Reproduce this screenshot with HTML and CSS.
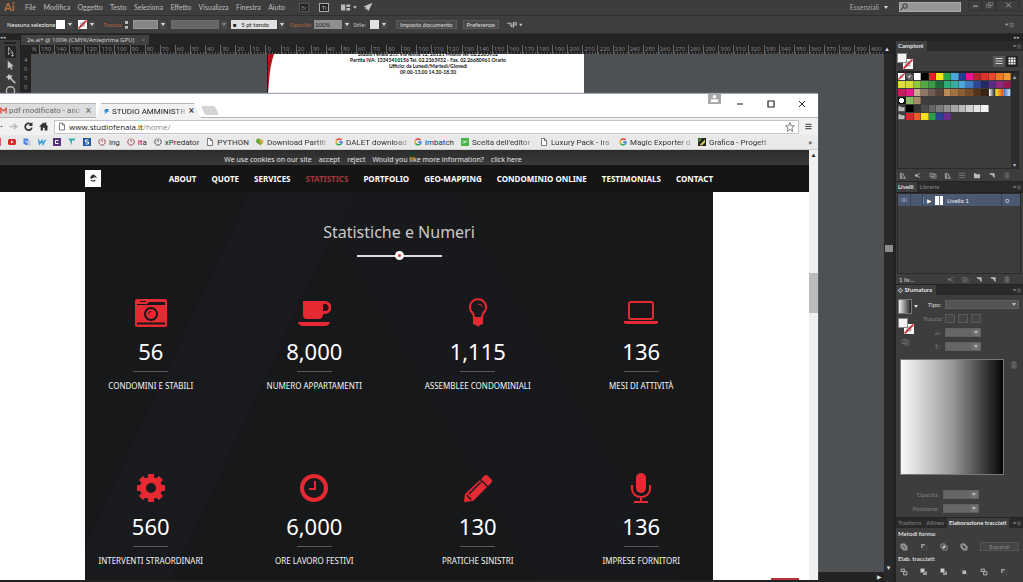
FILE: index.html
```html
<!DOCTYPE html>
<html lang="it">
<head>
<meta charset="utf-8">
<title>Illustrator</title>
<link rel="stylesheet" href="styles.css">
</head>
<body>
<svg class="defs" aria-hidden="true">
  <symbol id="clock" viewBox="0 0 16 16"><path d="M5 2a6.500 6.500 0 1 0 6 0M8 1v7" fill="none" stroke="currentColor" stroke-width="1.600"/></symbol>
  <symbol id="page" viewBox="0 0 16 16"><path d="M3 1h6l4 4v10H3zM9 1v4h4" fill="#fff" stroke="#555" stroke-width="1.500"/></symbol>
  <symbol id="goog" viewBox="0 0 16 16"><g fill="none" stroke-width="3"><path d="M13 4A6 6 0 0 0 3 5" stroke="#e34133"/><path d="M3 5a6 6 0 0 0 0 6" stroke="#f3b605"/><path d="M3 11a6 6 0 0 0 9 1" stroke="#32a350"/><path d="M12 12.500A6 6 0 0 0 14 8H8" stroke="#4081ec"/></g></symbol>
  <symbol id="menu" viewBox="0 0 16 10"><path d="M0 3l3 3 3-3zM8 2h8M8 5h8M8 8h8" fill="currentColor" stroke="currentColor"/></symbol>
  <symbol id="unite" viewBox="0 0 16 16"><path d="M2 2h8v4h4v8H6v-4H2z" fill="#777" stroke="#bbb" stroke-width="1.500"/></symbol>
  <symbol id="minus" viewBox="0 0 16 16"><path d="M2 2h8v3H5v5H2z" fill="#999"/><path d="M6 6h8v8H6z" fill="none" stroke="#777" stroke-dasharray="2"/></symbol>
  <symbol id="cross" viewBox="0 0 16 16"><path d="M2 2h8v8H2zM6 6h8v8H6z" fill="none" stroke="#aaa" stroke-width="1.500"/><path d="M6 6h4v4H6z" fill="#ccc"/></symbol>
  <symbol id="exclude" viewBox="0 0 16 16"><path d="M2 2h8v8H2zM6 6h8v8H6z" fill="#666" stroke="#bbb" stroke-width="1.500"/><path d="M6 6h4v4H6z" fill="#333"/></symbol>
  <symbol id="divide" viewBox="0 0 16 16"><path d="M2 2h7v5H2zM7 7h7v7H7z" fill="#555" stroke="#bbb" stroke-width="1.500"/></symbol>
  <symbol id="trim" viewBox="0 0 16 16"><path d="M1 1h8v8H1z" fill="#c9c9c9"/><path d="M10 7h4v7H6v-4h4z" fill="#999"/></symbol>
  <symbol id="crop" viewBox="0 0 16 16"><path d="M5 5h7v7H5z" fill="#bbb"/><path d="M1 4h4M12 12h3M3 8h2M12 8h2" stroke="#888"/></symbol>
  <symbol id="new" viewBox="0 0 16 16"><path d="M2 3h12v11l-5-5V7H5z" fill="#bbb"/></symbol>
  <symbol id="trash" viewBox="0 0 16 16"><path d="M2 4h12M6 4V2h4v2M4 5v9h8V5M7 6v7M9 6v7" fill="none" stroke="currentColor" stroke-width="1.400"/></symbol>
  <symbol id="books" viewBox="0 0 16 16"><path d="M2 2v12M5 2v12M8 3l4 11M1 14h14" fill="none" stroke="#aaa" stroke-width="2"/></symbol>
  <symbol id="share" viewBox="0 0 16 16"><path d="M13 3L4 8l9 5" fill="none" stroke="#aaa" stroke-width="2"/><circle cx="4" cy="8" r="3" fill="#bbb"/></symbol>
  <symbol id="cards" viewBox="0 0 16 16"><path d="M1 3h10v8H1zM5 6h10v8H5zM8 10h4" fill="none" stroke="#aaa" stroke-width="1.500"/></symbol>
  <symbol id="folder" viewBox="0 0 16 16"><path d="M1 3h5l1 2h8v9H1z" fill="#bbb"/></symbol>
  <symbol id="list" viewBox="0 0 16 16"><path d="M1 3h14M1 8h14M1 13h14" stroke="currentColor" stroke-width="2"/></symbol>
  <symbol id="grid" viewBox="0 0 16 16"><path d="M1 3h14M1 8h14M1 13h14" stroke="#eee" stroke-width="4" stroke-dasharray="4 1"/></symbol>
  <symbol id="none" viewBox="0 0 16 16"><path d="M0 0h16v16H0z" fill="#fff"/><path d="M1 15L15 1" stroke="#d8262c" stroke-width="3"/><path d="M5 5h6v6H5z" fill="none" stroke="#555"/></symbol>
</svg>

<div class="app">
  <header class="menubar">
    <span class="ai">Ai</span>
    <nav class="menus"><button>File</button><button>Modifica</button><button>Oggetto</button><button>Testo</button><button>Seleziona</button><button>Effetto</button><button>Visualizza</button><button>Finestra</button><button>Aiuto</button></nav>
    <span class="chip dim">Br</span><span class="chip">Ti</span>
    <svg class="layout-ico" viewBox="0 0 28 14"><path d="M0 2h7v10H0zM9 2h6v4H9zM9 8h6v4H9z" fill="#bbb"/><path d="M20 5h6l-3 4z" fill="#ccc"/></svg>
    <svg class="rocket" viewBox="0 0 16 16"><path d="M15 1L1 7l4 2-2 3 4-1 1 4 3-5z" fill="#c4c4c4"/></svg>
    <button class="workspace">Essenziali <i class="caret"></i></button>
    <label class="find"><svg viewBox="0 0 16 16"><circle cx="10" cy="6" r="4.500" fill="none" stroke="#333" stroke-width="2"/><path d="M6 9l-5 6" stroke="#333" stroke-width="2"/></svg><input type="text" aria-label="Cerca"></label>
    <button class="wbtn" aria-label="Riduci"><svg viewBox="0 0 12 10"><path d="M2 7h8" stroke="#aaa" stroke-width="2"/></svg></button>
    <button class="wbtn" aria-label="Ripristina"><svg viewBox="0 0 12 10"><path d="M4 1h7v5H4zM1 4h7v5H1z" fill="none" stroke="#999"/></svg></button>
    <button class="wbtn" aria-label="Chiudi"><svg viewBox="0 0 12 10"><path d="M2 1l8 8M10 1L2 9" stroke="#aaa" stroke-width="1.500"/></svg></button>
  </header>

  <div class="controls">
    <span class="sel-state">Nessuna selezione</span>
    <span class="sw white"></span><i class="caret"></i>
    <svg class="sw"><use href="#none"/></svg><i class="caret"></i>
    <span class="orange stroke-label">Traccia:</span><i class="spin"></i>
    <select class="w-s" aria-label="Traccia"><option></option></select><i class="caret"></i>
    <select class="w-m dimfield" aria-label="Profilo"><option></option></select><i class="caret dimcaret"></i>
    <select class="brush" aria-label="Pennello"><option>■ &nbsp; 5 pt tondo</option></select><i class="caret"></i>
    <label class="orange" for="opac">Opacità:</label><input id="opac" class="opac" type="text" value="100%"><i class="caret"></i>
    <span class="style-label">Stile:</span><span class="sw grey"></span><i class="caret"></i>
    <button class="cbtn">Imposta documento</button><button class="cbtn">Preferenze</button>
    <svg class="tail" viewBox="0 0 28 14"><path d="M1 4h8M5 7h4v4M12 2v10M12 3h5v4h-5" stroke="#bbb" fill="none" stroke-width="2"/><path d="M22 5h6l-3 4z" fill="#ccc"/></svg>
    <svg class="flyout"><use href="#menu"/></svg>
  </div>

  <div class="work">
    <aside class="tools">
      <span class="dots">◂◂</span>
      <span class="grip"></span>
      <svg class="active" viewBox="0 0 16 16"><path d="M5 1v11l3-3 4 1zM11 11v4M9 13h4" fill="none" stroke="#ccc"/></svg>
      <svg viewBox="0 0 16 16"><path d="M4 1v12l3-3 2 4 2-1-2-4h4z" fill="#c8c8c8"/></svg>
      <svg viewBox="0 0 16 16"><path d="M7 7l8 8" stroke="#ccc" stroke-width="2"/><path d="M6 1l1 3 4-1-2 3 2 3-4-1-2 3-1-4-3-1 3-2z" fill="#ccc"/></svg>
      <svg viewBox="0 0 16 16"><circle cx="8" cy="7" r="6" fill="none" stroke="#bbb" stroke-width="2"/></svg>
    </aside>
    <main class="doc">
      <div class="doctabs"><span class="doctab">2e.ai* @ 100% (CMYK/Anteprima GPU) <b>×</b></span></div>
      <div class="ruler"><span class="origin">N</span><div class="ticks" id="ticks"></div><span class="up">▲</span></div>
      <div class="stage">
        <div class="vruler"><span>4</span><span>0</span><span>5</span><span>0</span></div>
        <div class="canvas">
          <div class="artboard">
            <svg class="swoosh" viewBox="0 0 8 40"><path d="M0 0h6Q2 12 1 27L0 40z" fill="#b5121b"/></svg>
            <p>Studio Fenaia S.r.l. Via Roma 12, 20121 Milano tel. 02.2363932</p>
            <p>Partita IVA: 13343410156 Tel. 02.2363932 - Fax. 02.26680961 Orario</p>
            <p>Ufficio: da Lunedì/Martedì/Giovedì</p>
            <p>09.00-13.00 14.30-18.30</p>
          </div>
          <div class="hscroll">▶</div>
        </div>
        <div class="vscroll"><span class="thumb"></span><span class="down">▼</span></div>
      </div>
    </main>
    <aside class="panels">
      <div class="collapse">▸▸</div>
      <div class="ptabs"><span class="on">Campioni</span><svg><use href="#menu"/></svg></div>
      <section class="pbody swatches">
        <div class="swhead"><span class="fillstroke"><i></i><svg><use href="#none"/></svg></span><button class="view" aria-label="Elenco"><svg><use href="#list"/></svg></button><button class="view dark" aria-label="Griglia"><svg><use href="#grid"/></svg></button></div>
        <div class="swlist"><div class="swgrid" id="swatches"></div><div class="swscroll"><span>▴</span><span>▾</span></div></div>
        <div class="pfoot"><svg><use href="#books"/></svg><svg><use href="#share"/></svg><svg><use href="#cards"/></svg><svg><use href="#books"/></svg><svg class="faint"><use href="#list"/></svg><svg><use href="#folder"/></svg><svg><use href="#new"/></svg><svg class="faint"><use href="#trash"/></svg></div>
      </section>
      <div class="ptabs"><span class="on">Livelli</span><span>Librerie</span><svg><use href="#menu"/></svg></div>
      <section class="pbody layers">
        <div class="layerlist"><div class="layer"><svg class="eye" viewBox="0 0 16 10"><path d="M1 5q7-8 14 0-7 7-14 0z" fill="none" stroke="#8fa0bb" stroke-width="1.500"/><circle cx="8" cy="5" r="2" fill="#8fa0bb"/></svg><i class="lock"></i><span class="tri">▶</span><i class="thumbn"></i><span class="lname">Livello 1</span><i class="target">○</i></div></div>
        <div class="pfoot layerfoot"><span>1 liv...</span><svg class="faint"><use href="#share"/></svg><svg class="faint"><use href="#cards"/></svg><svg><use href="#new"/></svg><svg><use href="#new"/></svg><svg class="faint"><use href="#trash"/></svg></div>
      </section>
      <div class="ptabs"><span class="on">◇ Sfumatura</span><svg><use href="#menu"/></svg></div>
      <section class="pbody gradient">
        <div class="gtop">
          <div class="gleft"><div class="gpick"><i class="gsw"></i><i class="caret"></i></div><span class="fillstroke"><i></i><svg><use href="#none"/></svg></span><svg class="faint"><use href="#cards"/></svg></div>
          <div class="gform">
            <label for="tipo" class="lit">Tipo:</label><span class="combo"><select id="tipo"><option></option></select></span>
            <span>Traccia:</span><span class="trio"><i></i><i></i><i></i></span>
            <label for="ang">⊿:</label><span class="combo short"><select id="ang"><option></option></select></span>
            <label for="prop">⇕:</label><span class="combo short"><select id="prop"><option></option></select></span>
          </div>
        </div>
        <div class="grow"><div class="gramp"></div><svg class="faint"><use href="#trash"/></svg></div>
        <div class="gform low">
          <label for="go">Opacità:</label><span class="combo short"><select id="go"><option></option></select></span>
          <label for="gp">Posizione:</label><span class="combo short"><select id="gp"><option></option></select></span>
        </div>
      </section>
      <div class="ptabs path"><span>Trasform</span><span>Allinea</span><span class="on">Elaborazione tracciati</span><svg><use href="#menu"/></svg></div>
      <section class="pbody pathfinder">
        <h2>Metodi forma:</h2>
        <div class="shapes"><svg><use href="#unite"/></svg><svg><use href="#minus"/></svg><svg><use href="#cross"/></svg><svg><use href="#exclude"/></svg><button disabled>Espandi</button></div>
        <h2>Elab. tracciati:</h2>
        <div class="shapes"><svg><use href="#divide"/></svg><svg><use href="#trim"/></svg><svg><use href="#trim"/></svg><svg><use href="#crop"/></svg><svg><use href="#divide"/></svg><svg><use href="#minus"/></svg></div>
      </section>
    </aside>
  </div>

  <div class="browser">
    <div class="titlebar">
      <div class="tab back"><svg viewBox="0 0 16 14"><path d="M2 14V2l6 6 6-6v12" fill="none" stroke="#dc4b3e" stroke-width="3"/></svg><span>pdf modificato - anc</span><b>×</b></div>
      <div class="tab front"><svg viewBox="0 0 16 16"><path d="M5 2h9l-3 5h3L3 14l3-6H2z" fill="#3b86c4"/></svg><span>STUDIO AMMINISTR</span><b>×</b></div>
      <div class="newtab"></div>
      <div class="winctl">
        <span class="avatar"><svg viewBox="0 0 12 10"><circle cx="6" cy="3" r="2" fill="#fff"/><path d="M2 9V6h8v3z" fill="#fff"/></svg></span>
        <button aria-label="Riduci"><svg viewBox="0 0 8 8"><path d="M1 4h6" stroke="#222" fill="none"/></svg></button>
        <button aria-label="Ingrandisci"><svg viewBox="0 0 8 8"><path d="M1 1h6v6H1z" stroke="#222" stroke-width="1.200" fill="none"/></svg></button>
        <button aria-label="Chiudi"><svg viewBox="0 0 8 8"><path d="M1 1l6 6M7 1L1 7" stroke="#222" fill="none"/></svg></button>
      </div>
    </div>
    <div class="toolbar">
      <svg class="cutoff" viewBox="0 0 3 16"><path d="M0 8h3" stroke="#555" stroke-width="2"/></svg>
      <svg viewBox="0 0 16 16"><path d="M1 8h12M8 3l6 5-6 5" fill="none" stroke="#bbb" stroke-width="2.500"/></svg>
      <svg viewBox="0 0 16 16"><path d="M13 5a6 6 0 1 0 1 5" fill="none" stroke="#333" stroke-width="3"/><path d="M15 0v7H8z" fill="#333"/></svg>
      <svg viewBox="0 0 16 16"><path d="M0 8l8-7 2 2V1h3v4l3 3-1 1v6h-5v-5H7v5H3V8z" fill="#333"/></svg>
      <div class="addr"><svg><use href="#page"/></svg><div class="url"><a href="#home">www.studiofenaia.it<span>/home/</span></a></div><svg class="star" viewBox="0 0 16 16"><path d="M8 1l2 5h5l-4 3.500 1.500 5.500L8 12l-4.500 3L5 9.500 1 6h5z" fill="none" stroke="#666" stroke-width="1.300"/></svg></div>
      <svg class="burger"><use href="#list"/></svg>
    </div>
    <div class="bookmarks">
      <i class="sliver"></i>
      <svg viewBox="0 0 16 16"><rect y="2" width="16" height="12" rx="3" fill="#d92a25"/><path d="M6 5l5 3-5 3z" fill="#fff"/></svg>
      <svg viewBox="0 0 16 16"><path d="M1 1h9l4 13H5l-4-3z" fill="#4a82dc"/><path d="M8 6h8v10h-6z" fill="#ccd3dd"/><path d="M4 6h3v2H4" stroke="#fff" fill="none"/></svg>
      <svg viewBox="0 0 16 16"><path d="M1 3l2 9 5-7 2 7 5-9" fill="none" stroke="#3f9fd8" stroke-width="3"/></svg>
      <svg viewBox="0 0 16 16"><path d="M0 0h16v16H0z" fill="#56327c"/><path d="M11 5H5v6h6" fill="none" stroke="#fff" stroke-width="2"/></svg>
      <svg viewBox="0 0 16 16"><path d="M1 1h14l-2 4H8v10L4 6z" fill="#2bb5b0"/></svg>
      <svg viewBox="0 0 16 16"><path d="M0 0h16v16H0z" fill="#2257a3"/><path d="M11 4H5v4h6v4H5" fill="none" stroke="#fff" stroke-width="2"/></svg>
      <a href="#b"><svg class="maroon"><use href="#clock"/></svg><span>ing</span></a>
      <a href="#b"><svg class="maroon"><use href="#clock"/></svg><span>ita</span></a>
      <a href="#b"><svg><use href="#clock"/></svg><span>xPredator</span></a>
      <a href="#b"><svg><use href="#page"/></svg><span>PYTHON</span></a>
      <a href="#b"><svg viewBox="0 0 16 16"><circle cx="5" cy="6" r="5" fill="#68a83b"/><circle cx="11" cy="7" r="4" fill="#e0a83a"/><path d="M3 10h10l-4 5z" fill="#7aa843"/></svg><span class="cut">Download Partiti</span></a>
      <a href="#b"><svg><use href="#goog"/></svg><span class="cut">DALET download</span></a>
      <a href="#b"><svg><use href="#goog"/></svg><span>imbatch</span></a>
      <a href="#b"><svg viewBox="0 0 16 16"><path d="M0 0h16v16H0z" fill="#45b649"/><path d="M3 6h4v4H3M9 10V6h4" stroke="#c8efc8" fill="none" stroke-width="1.500"/></svg><span class="cut">Scelta dell'editor</span></a>
      <a href="#b"><svg><use href="#page"/></svg><span class="cut">Luxury Pack - Ira</span></a>
      <a href="#b"><svg><use href="#goog"/></svg><span class="cut">Magic Exporter d</span></a>
      <a href="#b"><svg viewBox="0 0 16 16"><path d="M0 0h16v16H0z" fill="#222"/><path d="M1 1h7L1 9z" fill="#5ca33a"/><path d="M3 14L14 3v6l-6 6z" fill="#d9c25a"/></svg><span class="cut">Grafica - Progett</span></a>
      <span class="more">»</span>
    </div>
    <div class="viewport">
      <div class="site">
        <div class="cookie"><span>We use cookies on our site</span><a href="#c">accept</a><a href="#c">reject</a><span>Would you like more information?</span><a href="#c">click here</a></div>
        <div class="sitenav">
          <a class="logo" href="#home" aria-label="Home"><svg viewBox="0 0 16 16"><path d="M4 8q1-4 5-5l1 1 4 4-4-1-4 2z" fill="#333"/><path d="M5 11q4 2 6 0" stroke="#222" stroke-width="1.500" fill="none"/></svg></a>
          <nav><a href="#a">ABOUT</a><a href="#a">QUOTE</a><a href="#a">SERVICES</a><a href="#a" class="cur">STATISTICS</a><a href="#a">PORTFOLIO</a><a href="#a">GEO-MAPPING</a><a href="#a">CONDOMINIO ONLINE</a><a href="#a">TESTIMONIALS</a><a href="#a">CONTACT</a></nav>
        </div>
        <div class="stats">
          <h1>Statistiche e Numeri</h1>
          <div class="divider"><i></i></div>
          <div class="cells">
            <div class="cell"><svg viewBox="0 0 34 30"><rect x="1" y="1" width="32" height="28" rx="2" fill="#e62a34"/><path d="M3 6h10l2-2h16v3H3zM6 3h6v1H6zM3 24.500h28v2H3z" fill="#17181a"/><circle cx="17" cy="16" r="6" fill="none" stroke="#17181a" stroke-width="2"/><path d="M14.500 16a2.500 2.500 0 0 1 2.500-2.500" stroke="#17181a" fill="none"/></svg><strong>56</strong><hr><span>CONDOMINI E STABILI</span></div>
            <div class="cell"><svg viewBox="0 0 34 30"><path fill-rule="evenodd" d="M6 3h22a6.500 6.500 0 0 1 0 13h-2q0 5-4 5h-12q-4 0-4-4zM26 6v7h2a3.500 3.500 0 0 0 0-7zM1 24h32q-1 4-5 4H6q-4 0-5-4z" fill="#e62a34"/></svg><strong>8,000</strong><hr><span>NUMERO APPARTAMENTI</span></div>
            <div class="cell"><svg viewBox="0 0 34 30"><path d="M13 20q0-4-3-7a8 8 0 1 1 14 0q-3 3-3 7z" fill="none" stroke="#e62a34" stroke-width="2"/><path d="M17 6q4 0 4 3" fill="none" stroke="#e62a34"/><path d="M12 19h10v7l-3 1q-2 3-4 0l-3-1z" fill="#e62a34"/></svg><strong>1,115</strong><hr><span>ASSEMBLEE CONDOMINIALI</span></div>
            <div class="cell"><svg viewBox="0 0 34 30"><rect x="5" y="4" width="24" height="17" rx="2" fill="none" stroke="#e62a34" stroke-width="2"/><path d="M0 23h34v2q-1 1-3 1H3q-2 0-3-1z" fill="#e62a34"/></svg><strong>136</strong><hr><span>MESI DI ATTIVITÀ</span></div>
            <div class="cell"><svg viewBox="0 0 34 30"><circle cx="17" cy="15" r="8" fill="none" stroke="#e62a34" stroke-width="6"/><g stroke="#e62a34" stroke-width="6"><path d="M17 1v4M17 25v4M3 15h4M27 15h4M7 5l3 3M24 22l3 3M27 5l-3 3M10 22l-3 3"/></g></svg><strong>560</strong><hr><span>INTERVENTI STRAORDINARI</span></div>
            <div class="cell"><svg viewBox="0 0 34 30"><circle cx="17" cy="15" r="12" fill="none" stroke="#e62a34" stroke-width="4"/><path d="M18 8v8h-6" fill="none" stroke="#e62a34" stroke-width="2"/></svg><strong>6,000</strong><hr><span>ORE LAVORO FESTIVI</span></div>
            <div class="cell"><svg viewBox="0 0 34 30"><path d="M23 3q2-2 4 0l3 3q2 2 0 4l-3 3-7-7zM19 7l7 7-14 14-9 1 1-8z" fill="#e62a34"/><path d="M8 21L20 9M6 22l1 2 2 1 1 2" stroke="#17181a" fill="none" stroke-width="1.500"/></svg><strong>130</strong><hr><span>PRATICHE SINISTRI</span></div>
            <div class="cell"><svg viewBox="0 0 34 30"><rect x="12" y="0" width="10" height="20" rx="5" fill="#e62a34"/><path d="M8 12v4a9 8 0 0 0 18 0v-4M17 24v4M10 29h14" fill="none" stroke="#e62a34" stroke-width="2"/></svg><strong>136</strong><hr><span>IMPRESE FORNITORI</span></div>
          </div>
        </div>
        <i class="totop"></i>
      </div>
      <div class="pagescroll"><span>▲</span><i></i></div>
    </div>
  </div>
</div>
<script src="app.js"></script>
</body>
</html>
```
FILE: styles.css
```css
* { box-sizing: border-box; }
body { margin: 0; font-family: Lato, "Noto Sans", sans-serif; font-size: 7px; color: #bdbdbd; background: #3c3c3d; overflow: hidden; }
button, input, select { font: inherit; color: inherit; border: 0; padding: 0; margin: 0; background: none; border-radius: 0; appearance: none; outline: 0; }
a { color: inherit; text-decoration: none; }
i { font-style: normal; }
svg { display: block; flex: none; }
.defs { position: absolute; width: 0; height: 0; }
.app { position: relative; display: flex; flex-direction: column; height: 100vh; }

.menubar { display: flex; align-items: center; height: 16px; padding: 0 0 1px 4px; background: #3d3d3e; border-bottom: 1px solid #2f2f30; }
.ai { width: 21px; font-size: 11px; font-weight: 700; line-height: 14px; color: #b8713c; }
.menus { display: flex; justify-content: space-between; min-width: 260px; line-height: 14px; }
.chip { width: 10px; height: 9px; margin-left: 10px; border: 1px solid #aaa; background: #222; font-size: 6px; line-height: 7px; text-align: center; }
.menus + .chip { margin-left: 14px; }
.chip.dim { border-color: #555; color: #777; }
.layout-ico { width: 17px; height: 9px; margin-left: 12px; }
.rocket { width: 10px; height: 10px; margin-left: 5px; }
.workspace { margin-left: auto; display: flex; align-items: center; gap: 4px; color: #a9a9a9; }
.find { display: flex; align-items: center; width: 62px; height: 10px; margin: 0 7px 0 10px; background: #979797; border: 1px solid #aaa; }
.find svg { width: 8px; height: 8px; }
.find input { flex: 1; min-width: 0; }
.wbtn { width: 14px; height: 11px; border: 1px solid #333; margin-bottom: 4px; }
.wbtn:last-child { width: 24px; margin-right: 3px; }
.wbtn svg { width: 7px; height: 6px; margin: auto; }

.caret { width: 6px; height: 8px; flex: none; background: #4a4a4b; display: grid; place-items: center; }
.caret::after { content: ""; border: 2px solid transparent; border-top: 3px solid #ddd; border-bottom: 0; }
.workspace .caret { background: none; }
.dimcaret::after { border-top-color: #888; }
.controls { display: flex; align-items: center; gap: 2px; height: 18px; padding: 0 9px 0 7px; background: #3e3e3f; border-bottom: 1px solid #2b2b2c; font-size: 6px; white-space: nowrap; }
.sel-state { flex: none; width: 47px; color: #eee; }
.sw { width: 9px; height: 9px; flex: none; }
.sw + .caret { margin-right: 3px; }
.white { background: #fff; }
.grey { background: #e2e2e2; }
.orange { color: #b3683a; }
.stroke-label { margin-left: 3px; width: 20px; }
.spin { width: 6px; height: 8px; border: 2px dotted #bbb; border-width: 0 0 0 3px; }
.w-s, .w-m { flex: none; height: 9px; background: #858687; border: 1px solid #999; }
.w-s { width: 25px; }
.w-m { width: 48px; margin-left: 3px; }
.dimfield { background: #666; border-color: #6c6c6c; }
.brush { flex: none; width: 46px; height: 9px; margin-left: 2px; padding-left: 2px; background: #e0e0e0; color: #222; }
.controls label { margin-left: 3px; width: 22px; }
.opac { flex: none; width: 28px; height: 9px; padding-left: 1px; background: #8f8f90; color: #222; }
.style-label { margin-left: 1px; width: 15px; }
.cbtn { height: 9px; padding: 0 3px; margin-left: 4px; background: #4a4a4b; border: 1px solid #5a5a5b; line-height: 7px; color: #ddd; }
.tail { width: 17px; height: 8px; margin-left: 5px; }
.flyout { width: 9px; height: 6px; margin-left: auto; color: #999; }

.work { flex: 1; display: flex; min-height: 0; }
.tools { width: 21px; background: #3c3c3d; border-right: 1px solid #222; overflow: hidden; display: flex; flex-direction: column; align-items: center; gap: 2px; }
.tools svg { width: 11px; height: 11px; }
.tools .active { height: 12px; background: #242425; }
.dots { width: 100%; height: 6px; background: #242425; font-size: 5px; line-height: 6px; }
.grip { width: 12px; height: 2px; background: #222; }
.doc { flex: 1; min-width: 0; display: flex; flex-direction: column; font-family: "Open Sans", sans-serif; }
.doctabs { height: 11px; background: #242425; display: flex; }
.doctab { height: 11px; padding: 0 4px 0 6px; background: #414142; line-height: 11px; font-size: 6px; color: #ddd; border-top: 1px solid #222; }
.doctab b { margin-left: 6px; font-weight: 400; color: #888; }
.ruler { display: flex; height: 9px; background: #232324; font-size: 6px; line-height: 9px; color: #8a8a8a; }
.origin { width: 18px; padding-left: 11px; }
.ticks { flex: 1; display: flex; }
.ticks span { flex: 1; width: 0; padding-left: 1px; border-left: 1px solid #666; background: repeating-linear-gradient(90deg, #555 0 1px, transparent 1px 3px) bottom / 100% 2px no-repeat; }
.up { width: 9px; color: #ddd; font-size: 6px; }
.stage { flex: 1; display: flex; min-height: 0; background: #4e5153; }
.vruler { width: 10px; padding: 2px 3px; background: #232324; font-size: 6px; line-height: 9px; color: #9a9a9a; }
.vruler span { display: block; }
.canvas { flex: 1; display: flex; flex-direction: column; justify-content: space-between; min-width: 0; overflow: hidden; }
.artboard { position: relative; width: 317px; height: 100px; margin-left: 236px; padding-left: 4px; background: #fff; border-left: 1px solid #222; overflow: hidden; text-align: center; color: #111; font-family: Lato, sans-serif; font-size: 5px; font-weight: 700; }
.artboard p { margin: 0; line-height: 6px; white-space: nowrap; }
.artboard p:nth-of-type(1) { margin-top: -3px; }
.swoosh { position: absolute; left: 0; top: 0; width: 8px; height: 40px; }
.hscroll { height: 10px; background: #232324; text-align: right; padding-right: 2px; font-size: 6px; line-height: 10px; color: #ddd; }
.vscroll { width: 9px; display: flex; flex-direction: column; justify-content: space-between; align-items: center; background: #29292a; color: #ddd; padding: 191px 0 9px; }
.thumb { width: 8px; height: 7px; background: #8d8d8d; }
.down { font-size: 6px; line-height: 9px; }

.panels { width: 130px; flex: none; display: flex; flex-direction: column; padding-left: 3px; background: #232324; }
.collapse { height: 6px; text-align: right; font-size: 5px; line-height: 6px; padding-right: 3px; }
.ptabs { display: flex; align-items: center; height: 10px; margin-top: 1px; font-size: 6px; line-height: 10px; color: #858585; white-space: nowrap; background: #2a2a2b; }
.ptabs span { padding: 0 4px 0 2px; }
.ptabs .on { background: #3e3e3f; color: #e3e3e3; font-weight: 700; }
.ptabs svg { width: 8px; height: 5px; margin: 0 2px 0 auto; color: #888; }
.path span { padding: 0 3px 0 2px; }
.pbody { background: #3d3d3e; }
.faint { opacity: .45; }
.swhead { display: flex; align-items: center; height: 20px; padding: 0 5px 0 1px; }
.fillstroke { position: relative; display: block; width: 16px; height: 16px; }
.fillstroke i { position: absolute; z-index: 1; left: 0; top: 0; width: 10px; height: 10px; background: #f4f4f4; border: 1px solid #888; }
.fillstroke svg { position: absolute; right: 0; bottom: 0; width: 10px; height: 10px; }
.view { width: 12px; height: 11px; background: #555; color: #ccc; margin-left: 1px; }
.fillstroke + .view { margin-left: auto; }
.view svg { width: 8px; height: 8px; margin: auto; }
.view.dark { background: #222; }
.swlist { display: flex; height: 98px; margin: 0 4px 0 1px; border: 1px solid #2b2b2c; border-top: 2px solid #222; }
.swgrid { flex: 1; display: grid; grid-template-columns: repeat(15, 1fr); grid-auto-rows: 7px; gap: 1px 0; align-content: start; }
.swgrid i { border-right: 1px solid #3336; }
.swgrid svg { width: 7px; height: 7px; }
.swscroll { width: 7px; display: flex; flex-direction: column; justify-content: space-between; background: #2d2d2e; font-size: 6px; line-height: 7px; text-align: center; }
.pfoot { display: flex; align-items: center; justify-content: space-between; height: 12px; padding: 0 12px 0 3px; color: #bbb; }
.pfoot svg { width: 8px; height: 7px; }
.layers { border-top: 1px solid #222; }
.layerlist { height: 81px; margin: 0 2px 0 1px; border: 1px solid #2b2b2c; }
.layer { display: flex; align-items: center; height: 12px; background: #4a5870; font-size: 6px; color: #eee; }
.eye { width: 8px; height: 6px; margin: 0 2px; }
.lock { width: 13px; height: 12px; border: solid #38445a; border-width: 0 1px; }
.tri { width: 12px; text-align: center; font-size: 6px; border-left: 1px solid #6683b8; }
.thumbn { width: 8px; height: 9px; background: linear-gradient(90deg, #fff 45%, #777 45% 60%, #fff 60%); }
.lname { flex: 1; padding-left: 4px; }
.target { width: 19px; height: 12px; padding-left: 3px; border-left: 1px solid #38445a; font-size: 7px; line-height: 12px; }
.layerfoot { gap: 6px; height: 10px; font-size: 6px; color: #ddd; }
.layerfoot span { margin-right: auto; }
.gtop { display: flex; padding: 3px 4px 0 2px; }
.gleft { display: flex; flex-direction: column; gap: 4px; width: 25px; padding-top: 1px; }
.gleft > svg { width: 9px; height: 8px; margin-left: 3px; }
.gpick { display: flex; align-items: center; gap: 1px; }
.gpick .caret { background: none; }
.gsw { width: 14px; height: 15px; background: linear-gradient(90deg, #eee, #222); border: 1px solid #777; }
.gform { flex: 1; display: grid; grid-template-columns: 18px 1fr; gap: 5px 4px; align-items: center; font-size: 6px; line-height: 9px; color: #808080; text-align: right; }
.gtop .gform { padding-top: 2px; }
.gform .lit { color: #ddd; }
.combo { display: grid; position: relative; height: 9px; border: 1px solid #5f5f60; background: #545455; }
.combo::after { content: ""; position: absolute; right: 2px; top: 2px; border: 2px solid transparent; border-top: 3px solid #bbb; border-bottom: 0; }
.short { width: 36px; background: linear-gradient(90deg, #666 0 26px, #707071 26px); }
.trio { display: flex; gap: 3px; }
.trio i { width: 10px; height: 9px; border: 1px solid #5a5a5a; background: #444; }
.grow { display: flex; gap: 6px; padding: 8px 4px 0; }
.gramp { width: 104px; height: 116px; background: linear-gradient(90deg, #fafaf8, #999a98 50%, #050505); border: 1px solid #777; }
.grow svg { width: 8px; height: 8px; margin: 2px 0; }
.low { grid-template-columns: 43px 1fr; padding: 15px 0 4px; }
.pathfinder { flex: 1; padding: 1px 4px 0 2px; }
.pathfinder h2 { margin: 0; font-size: 6px; line-height: 10px; font-weight: 700; color: #ddd; }
.shapes { display: flex; align-items: center; gap: 12px; height: 15px; padding-left: 2px; }
.shapes svg { width: 8px; height: 8px; }
.shapes button { flex: 1; height: 9px; background: #454546; border: 1px solid #555; font-size: 6px; line-height: 7px; color: #888; }

.browser { position: absolute; left: 0; right: 205px; top: 94px; bottom: 0; display: flex; flex-direction: column; background: #fff; border-bottom: 2px solid #222; color: #222; box-shadow: 0 -1px 1px #9aa3b5; font-size: 8px; font-family: Roboto, sans-serif; }
.titlebar { display: flex; align-items: flex-end; height: 24px; border-bottom: 1px solid #b5b5b5; }
.tab { display: flex; align-items: center; width: 96px; height: 14px; padding: 0 5px 0 0; background: #dcdddf; color: #666; border-top: 1px solid #b5b5b5; }
.tab svg { width: 7px; height: 7px; }
.tab span { flex: 1; width: 0; margin: 0 4px 0 2px; overflow: hidden; white-space: nowrap; mask-image: linear-gradient(90deg, #000 85%, #0004); }
.tab b { font-weight: 400; font-size: 10px; line-height: 10px; }
.front { width: 105px; height: 15px; margin-bottom: -1px; padding: 0 7px; background: #f1f1f1; color: #222; clip-path: polygon(0 100%, 5px 0, 98px 0, 100% 100%); }
.newtab { width: 14px; height: 9px; margin: 0 0 2px 2px; background: #d3d4d6; transform: skewX(25deg); border-radius: 2px; }
.winctl { display: flex; align-self: stretch; align-items: center; gap: 23px; margin-left: auto; padding: 0 12px 3px 0; }
.winctl button, .winctl button svg { width: 8px; height: 8px; }
.avatar { width: 13px; height: 10px; margin-right: -8px; align-self: flex-start; background: #a9a9a9; }
.avatar svg { width: 13px; height: 9px; }
.toolbar { display: flex; align-items: center; gap: 6px; height: 17px; padding: 0 6px 0 0; background: #f1f1f1; }
.toolbar > svg { width: 9px; height: 9px; }
.toolbar .cutoff { width: 3px; }
.addr { flex: 1; display: flex; align-items: center; gap: 3px; height: 14px; padding: 0 3px; background: #fff; border: 1px solid #c4c4c4; }
.addr svg { width: 8px; height: 9px; }
.url { flex: 1; font-family: "Open Sans", sans-serif; }
.url span { color: #888; }
.addr .star { width: 10px; height: 10px; }
.toolbar .burger { width: 7px; }
.bookmarks { display: flex; align-items: center; gap: 7px; height: 15px; padding-right: 6px; background: #e9e9e9; border-bottom: 1px solid #cfcfcf; white-space: nowrap; }
.sliver { width: 1px; height: 8px; background: #d55; }
.bookmarks svg { width: 8px; height: 8px; }
.bookmarks a { display: flex; align-items: center; gap: 3px; color: #333; }
.cut { width: 61px; overflow: hidden; mask-image: linear-gradient(90deg, #000 80%, #0004); }
.maroon { color: #8d2b30; }
.more { margin-left: auto; }
.viewport { flex: 1; display: flex; min-height: 0; }
.site { position: relative; flex: 1; min-width: 0; overflow: hidden; font-family: "Noto Sans", sans-serif; }
.cookie { display: flex; justify-content: center; gap: 7px; height: 15px; padding-right: 63px; background: linear-gradient(#2c2c2d, #3a3a3b); font-size: 7px; line-height: 19px; color: #e4e4e4; }
.sitenav { display: flex; align-items: center; height: 27px; padding: 0 96px 0 85px; background: #151516; color: #fff; font-size: 8px; font-weight: 700; line-height: 10px; }
.logo { width: 16px; height: 17px; padding: 2px; background: #fff; }
.logo svg { width: 12px; height: 12px; }
.sitenav nav { flex: 1; display: flex; justify-content: flex-end; gap: 15px; white-space: nowrap; }
.cur { color: #a5363c; }
.stats { margin: 0 96px 0 85px; padding: 28px 10px 60px 4px; color: #f5f5f5; background: linear-gradient(115deg, transparent 20%, #191a1d 20% 32%, transparent 32%), linear-gradient(60deg, transparent 55%, #18191c 55% 70%, transparent 70%), #17181a; }
.stats h1 { margin: 0 -6px 0 0; font-size: 16px; line-height: 24px; font-weight: 400; color: #c9c9c9; text-align: center; }
.divider { display: grid; justify-items: center; align-items: center; height: 9px; margin: 7px -6px 0 0; background: linear-gradient(#ddd, #ddd) center / 85px 2px no-repeat; }
.divider i { width: 9px; height: 9px; border-radius: 50%; border: 3px solid #fff; background: #d33; }
.cells { display: grid; grid-template-columns: repeat(4, 1fr); gap: 81px 40px; margin-top: 38px; }
.cell { display: flex; flex-direction: column; align-items: center; white-space: nowrap; font-size: 8px; }
.cell svg { width: 34px; height: 30px; }
.cell strong { margin-top: 8px; font-size: 22px; line-height: 30px; font-weight: 400; color: #fff; }
.cell hr { width: 35px; height: 1px; margin: 5px 0 7px; border: 0; background: #58595b; }
.cell span { line-height: 13px; }
.totop { position: absolute; right: 10px; bottom: 0; width: 28px; height: 2px; background: #b5333b; }
.pagescroll { width: 9px; background: #f0f0f0; text-align: center; font-size: 6px; line-height: 9px; }
.pagescroll span { display: block; }
.pagescroll i { display: block; height: 40px; margin-top: 114px; background: #bcbcbc; }
```
FILE: app.js
```js
const ticks = document.getElementById('ticks');
for (let v = -150; v <= 400; v += 10) {
  const s = document.createElement('span');
  s.textContent = Math.abs(v);
  ticks.append(s);
}
const rows = [
  'none reg #fff #000 #e6202b #f7e61c #2ea64b #4aa8dc #2c3a94 #ec118c #b8242e #e0322d #e8492d #ee7a25 #f39a36',
  '#dfe02b #d6dd33 #8dc63f #53a944 #3a9a46 #1f6a3a #2fae7c #3aa9a0 #4aa6dc #3f7bc0 #2f4796 #262a63 #5d2a86 #8d2a80 #98194f',
  '#d3155b #e5178b #c4a98a #8e7664 #6f5c50 #54443b #b98a5a #a3733f #8c5f33 #774b28 #51321a #3a2314 linear-gradient(90deg,#fff,#222) linear-gradient(90deg,#f7e02a,#e64b22) linear-gradient(90deg,#3f7bc0,#cfe0f5)',
  'radial-gradient(#fff_50%,#111_55%) #8bb860 #a68a66 - - - - - - - - - - - -',
  'folder #000 #333 #4c4c4c #666 #7c7c7c #909090 #a5a5a5 #bababa #d0d0d0 #e4e4e4 #f2f2f2 - - -',
  'folder #e2222c #ea5b25 #f5e021 #2c9c48 #2c3f96 #6d2d8c'
];
const grid = document.getElementById('swatches');
const icon = id => `<svg><use href="#${id}"/></svg>`;
rows.join(' ').split(' ').forEach(c => {
  const i = document.createElement('i');
  if (c === 'none' || c === 'folder') i.innerHTML = icon(c);
  else if (c === 'reg') i.innerHTML = icon('cross');
  else if (c === '-') i.style.borderColor = 'transparent';
  else i.style.background = c.replace(/_/g, ' ');
  grid.append(i);
});
```
